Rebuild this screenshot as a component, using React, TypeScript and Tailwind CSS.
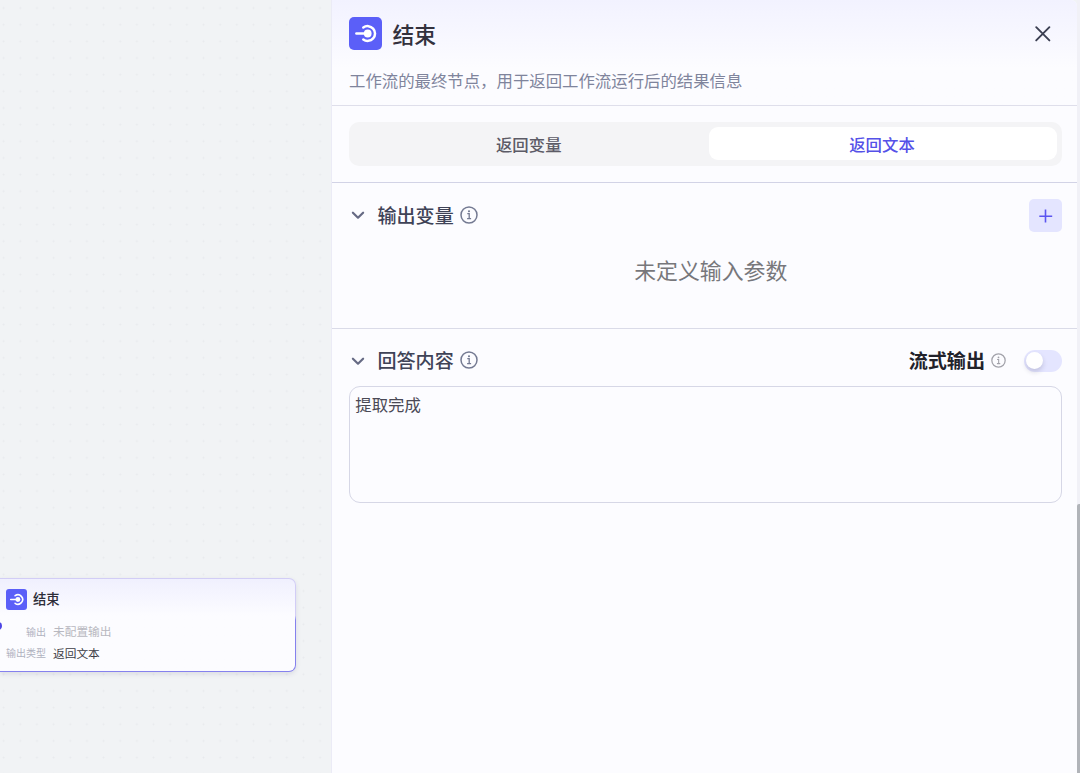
import React from 'react';

function EndIcon({ className }: { className: string }) {
  return (
    <svg viewBox="0 0 33 33" className={className} fill="none" aria-hidden="true">
      <path d="M7.4 16.5H19" stroke="white" strokeWidth="2.5" strokeLinecap="round" />
      <circle cx="18.7" cy="16.5" r="3.9" fill="white" />
      <path d="M14.3 10.5A7.4 7.4 0 1 1 14.3 22.5" stroke="white" strokeWidth="2.5" strokeLinecap="round" />
    </svg>
  );
}

function InfoIcon({ className }: { className: string }) {
  return (
    <svg viewBox="0 0 18 18" className={className} fill="none" stroke="currentColor" aria-hidden="true">
      <circle cx="9" cy="9" r="8" strokeWidth="1.5" />
      <path d="M7.3 7.7H9.2V12.6M7.1 12.7H11.1" strokeWidth="1.3" />
      <circle cx="9" cy="5.3" r="1.05" fill="currentColor" stroke="none" />
    </svg>
  );
}

function Chevron() {
  return (
    <svg viewBox="0 0 14 10" className="mt-px h-[10px] w-[14px] text-[#666a84]" fill="none" aria-hidden="true">
      <path d="M1.9 2.7L7 7.7L12.1 2.7" stroke="currentColor" strokeWidth="2.2" strokeLinecap="round" strokeLinejoin="round" />
    </svg>
  );
}

function SectionTitle({ title }: { title: string }) {
  return (
    <div className="flex items-center pb-[2px] pl-[2px]">
      <Chevron />
      <span className="ml-[12.4px] text-[19.1px] leading-[28px] font-medium text-[#3f4357]">{title}</span>
      <InfoIcon className="ml-[6.6px] h-[18px] w-[18px] text-[#747a92]" />
    </div>
  );
}

function NodeCard() {
  return (
    <div className="relative mt-[578px] h-[94px] w-[296px]">
      <div className="h-full rounded-r-[7px] bg-linear-to-b from-[#d2cdf6] from-40% to-[#8581ee] to-45% pt-px pr-px pb-px shadow-[0_2px_5px_rgba(60,60,100,0.12)]">
        <div className="h-full rounded-r-[6px] bg-[#fcfcff] bg-linear-to-b from-[#f0f0fe] to-[#fcfcff] to-40% pt-[10px] pl-[6px]">
          <div className="flex h-[21px] items-center">
            <div className="h-[21px] w-[21px] rounded-[3px] bg-[#5b5ff8]">
              <EndIcon className="h-full w-full" />
            </div>
            <span className="ml-[6px] pb-px text-[13.3px] leading-[20px] font-medium text-[#2c2c38]">结束</span>
          </div>
          <div className="mt-[10px] flex h-[22px] items-center whitespace-nowrap">
            <span className="w-[40px] text-right text-[10px] text-[#b0b2c0]">输出</span>
            <span className="ml-[7px] text-[11.7px] text-[#b8b8c0]">未配置输出</span>
          </div>
          <div className="flex h-[21px] items-center whitespace-nowrap">
            <span className="w-[40px] text-right text-[10px] text-[#b0b2c0]">输出类型</span>
            <span className="ml-[7px] text-[11.7px] text-[#3c3c46]">返回文本</span>
          </div>
        </div>
      </div>
      <span className="absolute top-[44px] left-[-6px] h-[8px] w-[8px] rounded-full bg-[#4d45e5]" />
    </div>
  );
}

export default function App() {
  return (
    <div className="flex h-[773px] w-[1080px] overflow-hidden bg-[#f1f3f6] font-['Noto_Sans_CJK_SC',sans-serif]">
      <div className="w-[331px] shrink-0 overflow-hidden bg-[#f1f3f5] bg-[radial-gradient(circle,#e8eaed_0.8px,transparent_1.2px)] bg-[length:16.67px_16.67px] bg-[position:-4.7px_-0.3px]">
        <NodeCard />
      </div>
      <main className="w-[746px] shrink-0 rounded-tr-[6px] border-l border-[#ebebf6] bg-[#fcfcff]">
        <header className="h-[106px] rounded-tr-[6px] border-b border-[#dfdfeb] bg-linear-to-b from-[#f2f2ff] to-[#fcfcff] to-65% pt-[17px] pr-[25px] pl-[17px]">
          <div className="flex h-[33px] items-center">
            <div className="h-[33px] w-[33px] rounded-[5px] bg-[#5b5ff8]">
              <EndIcon className="h-[33px] w-[33px]" />
            </div>
            <h1 className="ml-[10.5px] text-[21.8px] leading-[32px] font-medium text-[#33313d]">结束</h1>
            <svg viewBox="0 0 18 18" className="ml-auto h-[18px] w-[18px]" aria-label="关闭">
              <path d="M2.2 2.2L15.4 15.4M15.4 2.2L2.2 15.4" stroke="#3b3f52" strokeWidth="1.9" strokeLinecap="round" />
            </svg>
          </div>
          <p className="mt-[18px] text-[16.4px] leading-[24px] text-[#7f849c]">工作流的最终节点，用于返回工作流运行后的结果信息</p>
        </header>
        <div className="h-[77px] border-b border-[#d2d3e6] pt-[16px] pr-[15px] pl-[17px]">
          <div className="flex h-[44px] rounded-[10px] bg-[#f4f4f6] py-[5px] pr-[5.5px] pl-[5px] text-[16.4px] leading-[34px] font-medium">
            <div className="flex-1 text-center text-[#5c5b66]">返回变量</div>
            <div className="ml-[5px] h-[33px] w-[348px] rounded-[9px] bg-white pr-px text-center text-[#5551e8]">返回文本</div>
          </div>
        </div>
        <section className="h-[146px] border-b border-[#dadbe8] pt-[16px] pr-[15px] pl-[17px]">
          <div className="flex h-[33px] items-center justify-between">
            <SectionTitle title="输出变量" />
            <div className="flex h-[33px] w-[33px] items-center justify-center rounded-[5px] bg-[#e4e5ff]">
              <svg viewBox="0 0 14 14" className="h-[14px] w-[14px]" aria-label="添加">
                <path d="M6.5 .5V13.5M.3 7.3H13.2" stroke="#5b55f0" strokeWidth="1.6" />
              </svg>
            </div>
          </div>
          <p className="mt-[22px] pl-[10.5px] text-center text-[21.9px] leading-[32px] text-[#77777b]">未定义输入参数</p>
        </section>
        <section className="pt-[16px] pr-[15px] pl-[17px]">
          <div className="flex h-[32px] items-center justify-between">
            <SectionTitle title="回答内容" />
            <div className="flex items-center">
              <span className="pb-[2px] text-[19.1px] leading-[28px] font-bold text-[#22222a]">流式输出</span>
              <InfoIcon className="mr-px mb-px ml-[6px] h-[15px] w-[15px] text-[#a2a2aa]" />
              <div className="ml-[17px] h-[22px] w-[38px] rounded-full bg-[#e4e5ff] pt-[2px] pl-[2px]">
                <div className="h-[17px] w-[17px] rounded-full bg-white shadow-[0_3px_5px_rgba(40,40,80,0.18)]" />
              </div>
            </div>
          </div>
          <div className="mt-[9px] h-[117px] rounded-[11px] border border-[#d6d7e6] px-[5.3px] pt-[5px] text-[16.4px] leading-[24px] text-[#4a4955]">提取完成</div>
        </section>
      </main>
      <div className="flex w-[3px] flex-col justify-end bg-[#f1f1f7]">
        <div className="h-[269px] rounded-tl-[2px] bg-[#b1b4b9]" />
      </div>
    </div>
  );
}
